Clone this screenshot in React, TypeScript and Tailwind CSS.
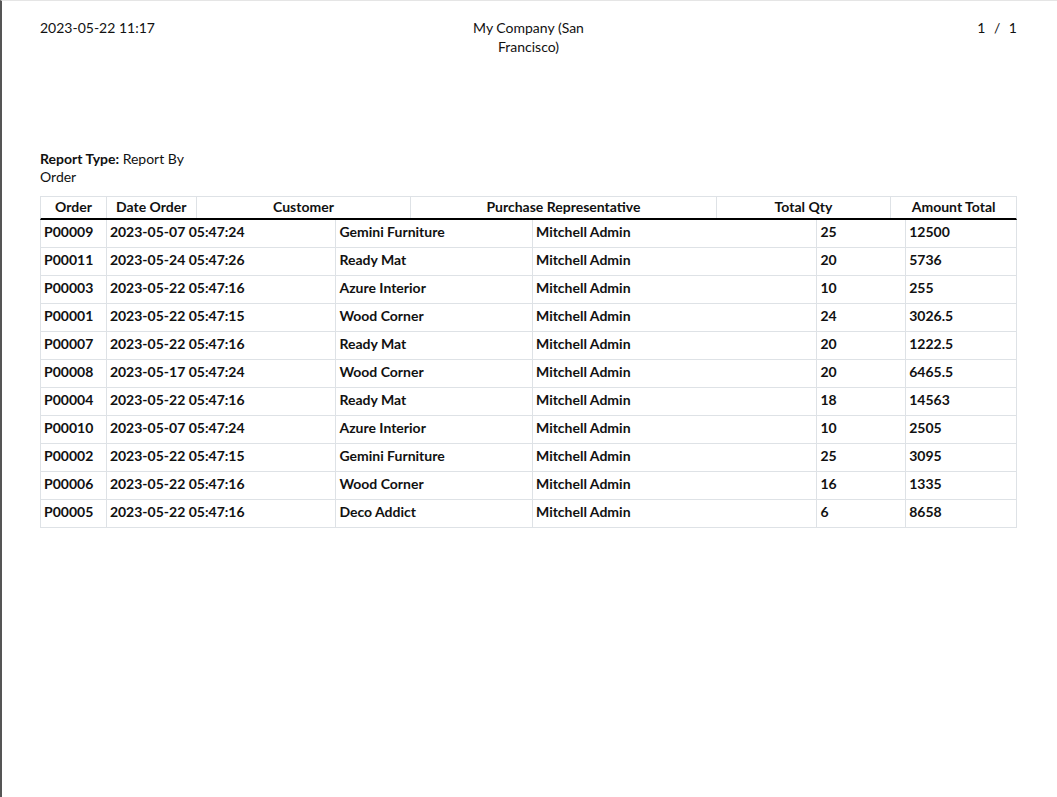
const rows = [
  ["P00009", "2023-05-07 05:47:24", "Gemini Furniture", "Mitchell Admin", "25", "12500"],
  ["P00011", "2023-05-24 05:47:26", "Ready Mat", "Mitchell Admin", "20", "5736"],
  ["P00003", "2023-05-22 05:47:16", "Azure Interior", "Mitchell Admin", "10", "255"],
  ["P00001", "2023-05-22 05:47:15", "Wood Corner", "Mitchell Admin", "24", "3026.5"],
  ["P00007", "2023-05-22 05:47:16", "Ready Mat", "Mitchell Admin", "20", "1222.5"],
  ["P00008", "2023-05-17 05:47:24", "Wood Corner", "Mitchell Admin", "20", "6465.5"],
  ["P00004", "2023-05-22 05:47:16", "Ready Mat", "Mitchell Admin", "18", "14563"],
  ["P00010", "2023-05-07 05:47:24", "Azure Interior", "Mitchell Admin", "10", "2505"],
  ["P00002", "2023-05-22 05:47:15", "Gemini Furniture", "Mitchell Admin", "25", "3095"],
  ["P00006", "2023-05-22 05:47:16", "Wood Corner", "Mitchell Admin", "16", "1335"],
  ["P00005", "2023-05-22 05:47:16", "Deco Addict", "Mitchell Admin", "6", "8658"],
];

const headCols = ["w-[65px]", "w-[90px]", "w-[215px]", "w-[306px]", "w-[175px]", "w-[126px]"];
const headNames = ["Order", "Date Order", "Customer", "Purchase Representative", "Total Qty", "Amount Total"];
const bodyCols = ["w-[65px]", "w-[230px]", "w-[197px]", "w-[285px]", "w-[89px]", "w-[111px]"];

export default function App() {
  return (
    <div
      className="w-[1057px] h-[797px] bg-white border-l-2 border-[#555] border-t border-t-[#e5e5e5] text-[14px] text-[#111]"
      style={{ fontFamily: "Lato, 'Open Sans', sans-serif" }}
    >
      <div className="flex pl-[38px] pr-[40px] pt-[17px] leading-[19px]">
        <div className="w-[300px]">2023-05-22 11:17</div>
        <div className="flex-1 flex justify-center">
          <div className="w-[120px] text-center">My Company (San Francisco)</div>
        </div>
        <div className="w-[300px] text-right [word-spacing:5px]">1 / 1</div>
      </div>

      <div className="pl-[38px] mt-[94px] leading-[18px] w-[200px]">
        <b>Report Type:</b> Report By Order
      </div>

      <div className="ml-[38px] mt-[10px] w-[977px]">
        <div className="flex border-t border-x border-[#dee2e6] border-b-2 border-b-black">
          {headNames.map((h, i) => (
            <div
              key={h}
              className={`${headCols[i]} h-[21px] leading-[20px] text-center font-bold ${i > 0 ? "border-l border-[#dee2e6]" : ""}`}
            >
              {h}
            </div>
          ))}
        </div>
        {rows.map((r) => (
          <div key={r[0]} className="flex border-x border-b border-[#dee2e6]">
            {r.map((c, i) => (
              <div
                key={i}
                className={`${bodyCols[i]} h-[27px] leading-[23px] pl-[3px] font-bold ${i > 0 ? "border-l border-[#dee2e6]" : ""}`}
              >
                {c}
              </div>
            ))}
          </div>
        ))}
      </div>
    </div>
  );
}
